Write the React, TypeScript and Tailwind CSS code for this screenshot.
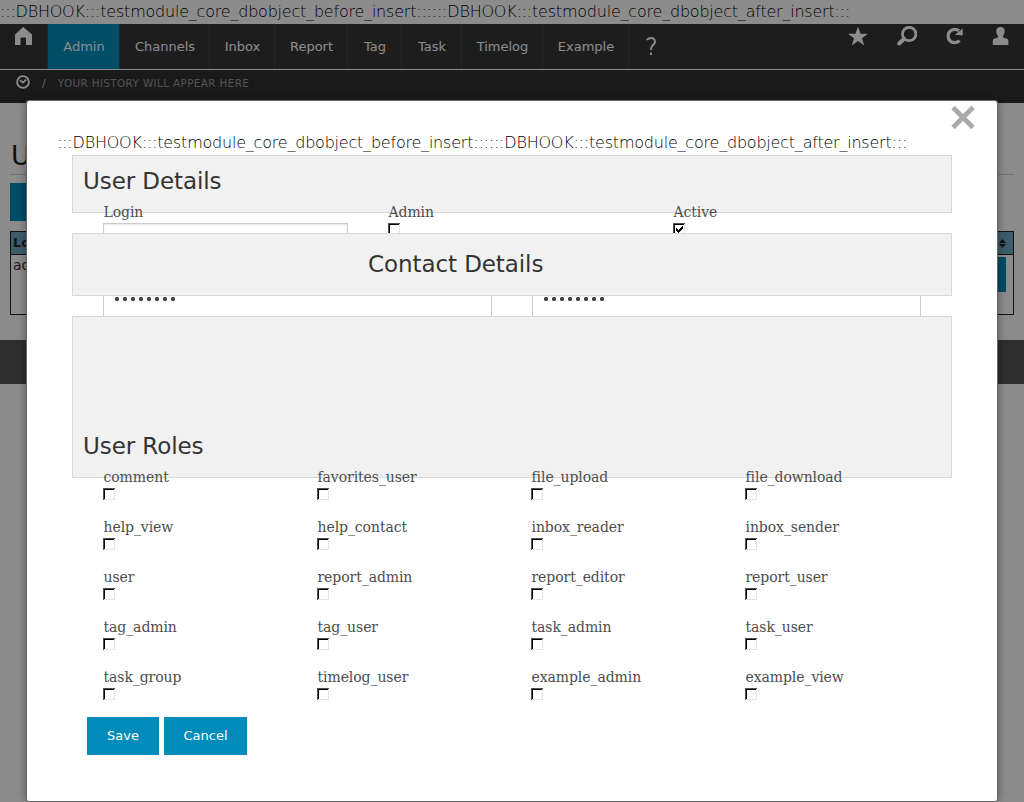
import React from "react";

const HOOK = ":::DBHOOK:::testmodule_core_dbobject_before_insert::::::DBHOOK:::testmodule_core_dbobject_after_insert:::";

const tabs = [
  { label: "Admin", width: "w-[72px]", active: true },
  { label: "Channels", width: "w-[90px]" },
  { label: "Inbox", width: "w-[65px]" },
  { label: "Report", width: "w-[73px]" },
  { label: "Tag", width: "w-[54px]" },
  { label: "Task", width: "w-[60px]" },
  { label: "Timelog", width: "w-[81px]" },
  { label: "Example", width: "w-[86px]" },
];

const roles = [
  "comment", "favorites_user", "file_upload", "file_download",
  "help_view", "help_contact", "inbox_reader", "inbox_sender",
  "user", "report_admin", "report_editor", "report_user",
  "tag_admin", "tag_user", "task_admin", "task_user",
  "task_group", "timelog_user", "example_admin", "example_view",
];

function HookText() {
  return (
    <div className="whitespace-nowrap font-['DejaVu_Sans',sans-serif] text-[16px] font-extralight leading-6 tracking-[-0.214px] text-black">
      {HOOK}
    </div>
  );
}

function Check({ checked = false }: { checked?: boolean }) {
  return (
    <svg width="12" height="12" viewBox="0 0 12 12" shapeRendering="crispEdges" className="block shrink-0">
      <path d="M0 0h12v12H0z" fill="#e6e4e2" />
      <path d="M0 0h12v1H1v11H0z" fill="#55524e" />
      <path d="M1 1h10v10H1z" fill="#000" />
      <path d="M2 2h9v9H2z" fill="#fff" />
      {checked && <path d="M3 5h1v1h1v1h1V6h1V5h1V4h1V3h1v3H9v1H8v1H7v1H6v1H5V9H4V8H3z" fill="#000" />}
    </svg>
  );
}

function Field({ label, checked }: { label: string; checked?: boolean }) {
  return (
    <div className="flex flex-col">
      <Label text={label} />
      <Check checked={checked} />
    </div>
  );
}

function Label({ text }: { text: string }) {
  return (
    <span className="h-[19px] whitespace-nowrap pl-[0.500px] font-['DejaVu_Serif',serif] text-[14px] font-light leading-[16px] tracking-[-0.080px] text-[#4d4d4d]">
      {text}
    </span>
  );
}

function Heading({ children }: { children: React.ReactNode }) {
  return <h3 className="whitespace-nowrap text-[23px] leading-8 tracking-[-0.080px] text-[#333]">{children}</h3>;
}

function Password() {
  return (
    <div className="flex h-5 w-[389px] gap-[2px] border-x border-[#ccc] pl-[11px] pt-px">
      {Array.from({ length: 8 }, (_, i) => (
        <svg key={i} width="6" height="4" viewBox="0 0 6 4" className="block">
          <circle cx="2" cy="2" r="2.1" fill="#404040" />
        </svg>
      ))}
    </div>
  );
}

function TopBar() {
  return (
    <nav className="flex h-[46px] border-b border-white bg-[#353535]">
      <div className="w-12 border-r border-[#464646] pl-[14px] pt-[3px]">
        <svg width="19" height="19" viewBox="0 0 19 19" fill="#fff">
          <path d="M9.2 0 18 7.6V18h-6v-6.6a1 1 0 0 0-1-1H7.500a1 1 0 0 0-1 1V18H1V7.600z" />
        </svg>
      </div>
      {tabs.map((t) => (
        <div
          key={t.label}
          className={`${t.width} flex items-center justify-center border-r border-[#464646] pl-px text-[13px] text-white ${t.active ? "bg-[#008cba]" : ""}`}
        >
          {t.label}
        </div>
      ))}
      <div className="flex w-[43px] items-center justify-center">
        <svg width="10" height="19" viewBox="0 0 10 19" fill="none" stroke="#fff" strokeWidth="1.900">
          <path d="M.8 3C2 1.500 3.300 1 5 1c2.500 0 4 1.300 4 3.500 0 1.900-1.100 2.800-2.400 4C5.200 9.800 5 10.500 5 13M5 15.500V18" />
        </svg>
      </div>
      <div className="ml-auto flex pr-[15px] pt-[2px]">
        <svg width="21" height="20" viewBox="0 0 21 20" fill="#fff" className="mr-[28px]">
          <path d="m10 .5 2.500 7.200H20l-6 4.500 2.200 7.300L10 15.100l-6.200 4.400L6 12.200 0 7.700h7.500z" />
        </svg>
        <svg width="20" height="20" viewBox="0 0 20 20" fill="none" stroke="#fff" className="mr-[28px]">
          <circle cx="12.200" cy="8" r="6.700" strokeWidth="2.800" />
          <path d="m7 13-4.800 4.500" strokeWidth="4" strokeLinecap="round" />
        </svg>
        <svg width="19" height="20" viewBox="0 0 19 20" className="mr-[28px]">
          <path d="M14 4.800A6.700 6.700 0 1 0 14.600 14.700" fill="none" stroke="#fff" strokeWidth="3.300" />
          <path d="M17.700 2.500V9.500L10 8.800z" fill="#fff" />
        </svg>
        <svg width="17" height="20" viewBox="0 0 17 20" fill="#fff">
          <path d="M8.500 1c2.800 0 4.400 1.900 4.200 4.500-.1 1.700-.7 3.200-1.700 4.300v1.700l4.200 1.300q1.200.5 1.200 2V19H.8v-4.200q0-1.500 1.200-2l4-1.300V9.800C4.900 8.700 4.300 7.200 4.200 5.500 4.100 2.900 5.700 1 8.500 1z" />
        </svg>
      </div>
    </nav>
  );
}

function BackPage() {
  return (
    <div className="h-full bg-white">
      <HookText />
      <TopBar />
      <div className="flex h-[33px] items-start bg-[#303030] pl-4 pt-[5px]">
        <svg width="14" height="14" viewBox="0 0 14 14" fill="none" stroke="#fff" strokeWidth="1.900">
          <circle cx="7" cy="7" r="5.900" />
          <path d="m4 5.200 3 2.500 3.200-3" strokeWidth="1.700" />
        </svg>
        <span className="ml-[12px] mt-px text-[11px] leading-4 text-[#bbb]">/</span>
        <span className="ml-[12px] text-[10.400px] leading-4 tracking-[0.380px] text-[#999]">YOUR HISTORY WILL APPEAR HERE</span>
      </div>
      <div className="h-[237px] px-[10px] pt-9">
        <h1 className="h-9 border-b border-[#ccc] pl-px text-[27px] leading-[33px] text-[#222]">Users</h1>
        <div className="mt-2 h-[38px] w-24 bg-[#008cba]" />
        <div className="mt-[10px] h-[84px] border border-[#222]">
          <div className="flex h-[23px] items-center justify-between border-b border-[#222] bg-[#70aac7] pl-[2px] pr-[7px] text-[13px] font-bold text-[#222]">
            Login
            <svg width="7" height="9" viewBox="0 0 7 9" fill="#222">
              <path d="M3.500 0 7 4H0zM0 5h7L3.500 9z" />
            </svg>
          </div>
          <div className="flex justify-between pl-[2px] pr-[7px] pt-[2px] text-[14px] leading-[17px] text-[#333]">
            admin
            <div className="h-[35px] w-24 bg-[#008cba]" />
          </div>
        </div>
      </div>
      <div className="h-11 bg-[#545454]" />
    </div>
  );
}

function Modal() {
  return (
    <div className="absolute left-[26px] top-[100px] flex h-[702px] w-[972px] flex-col rounded-[3px] border border-[#666] bg-white pl-[30px] shadow-[0_0_10px_rgba(0,0,0,0.4)]">
      <svg width="26" height="26" viewBox="0 0 26 26" className="absolute right-[21px] top-[4px]">
        <path d="m3 2.500 20 20M23 2.500l-20 20" stroke="#aaa" strokeWidth="4.800" />
      </svg>
      <div className="mt-[30px] h-6 shrink-0">
        <HookText />
      </div>
      <section className="ml-[15px] h-[58px] w-[880px] shrink-0 border border-[#d8d8d8] bg-[#f1f1f1] pl-[10px] pt-[9px]">
        <Heading>User Details</Heading>
      </section>
      <div className="ml-[46px] -mt-[9px] grid h-[29px] w-[855px] shrink-0 grid-cols-3 overflow-hidden">
        <div className="flex flex-col">
          <Label text="Login" />
          <div className="h-9 w-[245px] border border-[#ccc] shadow-[inset_0_1px_2px_rgba(0,0,0,0.1)]" />
        </div>
        <Field label="Admin" />
        <Field label="Active" checked />
      </div>
      <section className="ml-[15px] flex h-[63px] w-[880px] shrink-0 items-center border border-[#d8d8d8] bg-[#f1f1f1] pb-[2px] pl-[295px]">
        <Heading>Contact Details</Heading>
      </section>
      <div className="ml-[46px] flex h-5 shrink-0 gap-10">
        <Password />
        <Password />
      </div>
      <section className="ml-[15px] flex h-[162px] w-[880px] shrink-0 items-end border border-[#d8d8d8] bg-[#f1f1f1] pb-[15px] pl-[10px]">
        <Heading>User Roles</Heading>
      </section>
      <div className="ml-[46px] -mt-[9px] grid w-[856px] shrink-0 auto-rows-[50px] grid-cols-4">
        {roles.map((r) => (
          <Field key={r} label={r} />
        ))}
      </div>
      <div className="-mt-[2px] ml-[30px] flex gap-[5px] text-[13px] text-white">
        <button className="h-[38px] w-[72px] bg-[#008cba]">Save</button>
        <button className="h-[38px] w-[83px] bg-[#008cba]">Cancel</button>
      </div>
    </div>
  );
}

export default function App() {
  return (
    <div className="relative h-[802px] w-[1024px] overflow-hidden font-['DejaVu_Sans',sans-serif]">
      <BackPage />
      <div className="absolute inset-0 bg-black/45" />
      <Modal />
    </div>
  );
}
